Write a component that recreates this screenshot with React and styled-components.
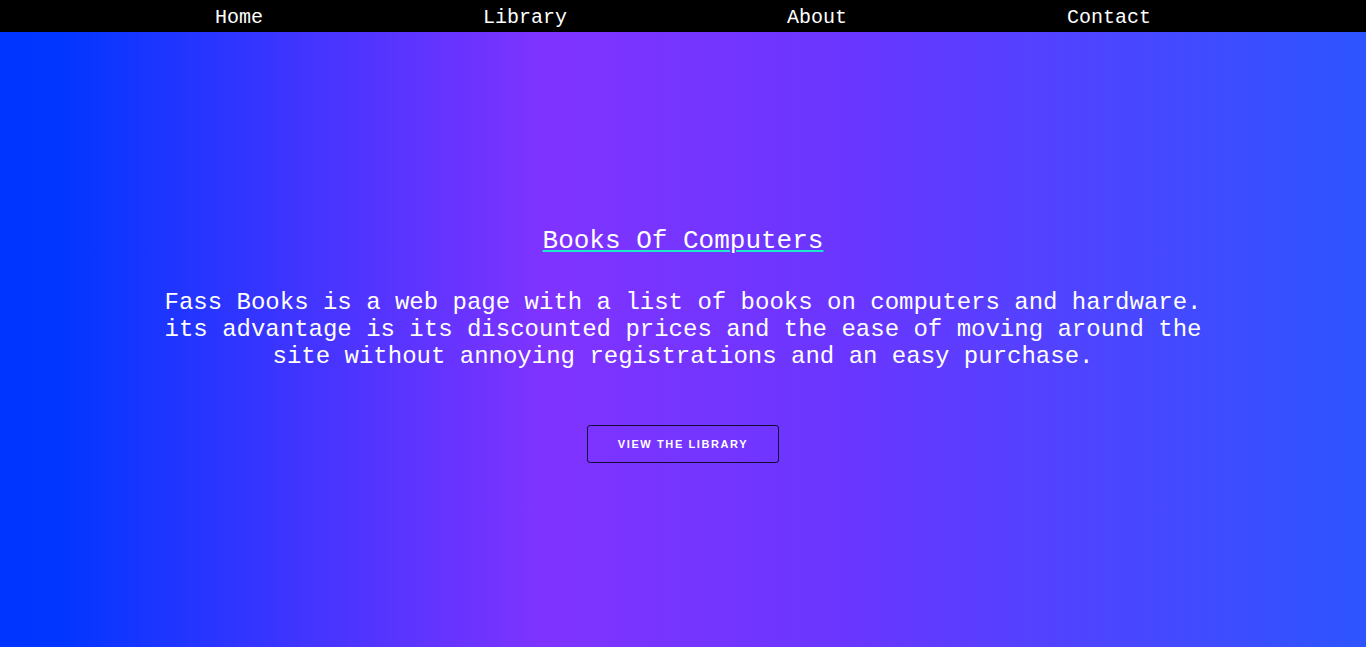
import React from "react";
import styled, { createGlobalStyle } from "styled-components";

const Global = createGlobalStyle`
  html, body { margin: 0; padding: 0; }
  body { font-family: "Liberation Mono", monospace; }
  * { box-sizing: border-box; }
`;

const Page = styled.div`
  min-height: 100vh;
  display: flex;
  flex-direction: column;
  background: linear-gradient(90deg, #0034ff 0%, #0036ff 4%, #8033ff 40%, #6a36ff 62%, #2d55ff 100%);
`;

const Nav = styled.nav`
  height: 32px;
  padding: 4px 215px 0;
  background: #000;
  display: flex;
  justify-content: space-between;
  align-items: center;
`;

const NavLink = styled.a`
  color: #fff;
  font-family: "Liberation Mono", monospace;
  font-size: 20px;
  line-height: 24px;
  text-decoration: none;
`;

const Hero = styled.main`
  flex: 1;
  display: flex;
  flex-direction: column;
  align-items: center;
  justify-content: center;
  padding-top: 10px;
  color: #fff;
  text-align: center;
`;

const Title = styled.h1`
  margin: 0;
  font-family: "Liberation Mono", monospace;
  font-weight: normal;
  font-size: 26px;
  line-height: 30px;
  text-decoration: underline;
  text-decoration-color: #1ee8c8;
  text-decoration-thickness: 2px;
  text-underline-offset: 1.5px;
`;

const Text = styled.p`
  margin: 33px 0 0;
  font-family: "Liberation Mono", monospace;
  font-size: 24px;
  line-height: 27px;
  max-width: 1060px;
`;

const Button = styled.button`
  margin-top: 55px;
  width: 192px;
  height: 38px;
  background: transparent;
  border: 1px solid #140a33;
  border-radius: 3px;
  color: #fff;
  font-family: "Liberation Sans", Arial, sans-serif;
  font-weight: bold;
  font-size: 11px;
  letter-spacing: 1.6px;
  cursor: pointer;
`;

export default function App() {
  return (
    <>
      <Global />
      <Page>
        <Nav>
          <NavLink href="#">Home</NavLink>
          <NavLink href="#">Library</NavLink>
          <NavLink href="#">About</NavLink>
          <NavLink href="#">Contact</NavLink>
        </Nav>
        <Hero>
          <Title>Books Of Computers</Title>
          <Text>
            Fass Books is a web page with a list of books on computers and hardware. its advantage is its discounted prices and the ease of moving around the site without annoying registrations and an easy purchase.
          </Text>
          <Button>VIEW THE LIBRARY</Button>
        </Hero>
      </Page>
    </>
  );
}
